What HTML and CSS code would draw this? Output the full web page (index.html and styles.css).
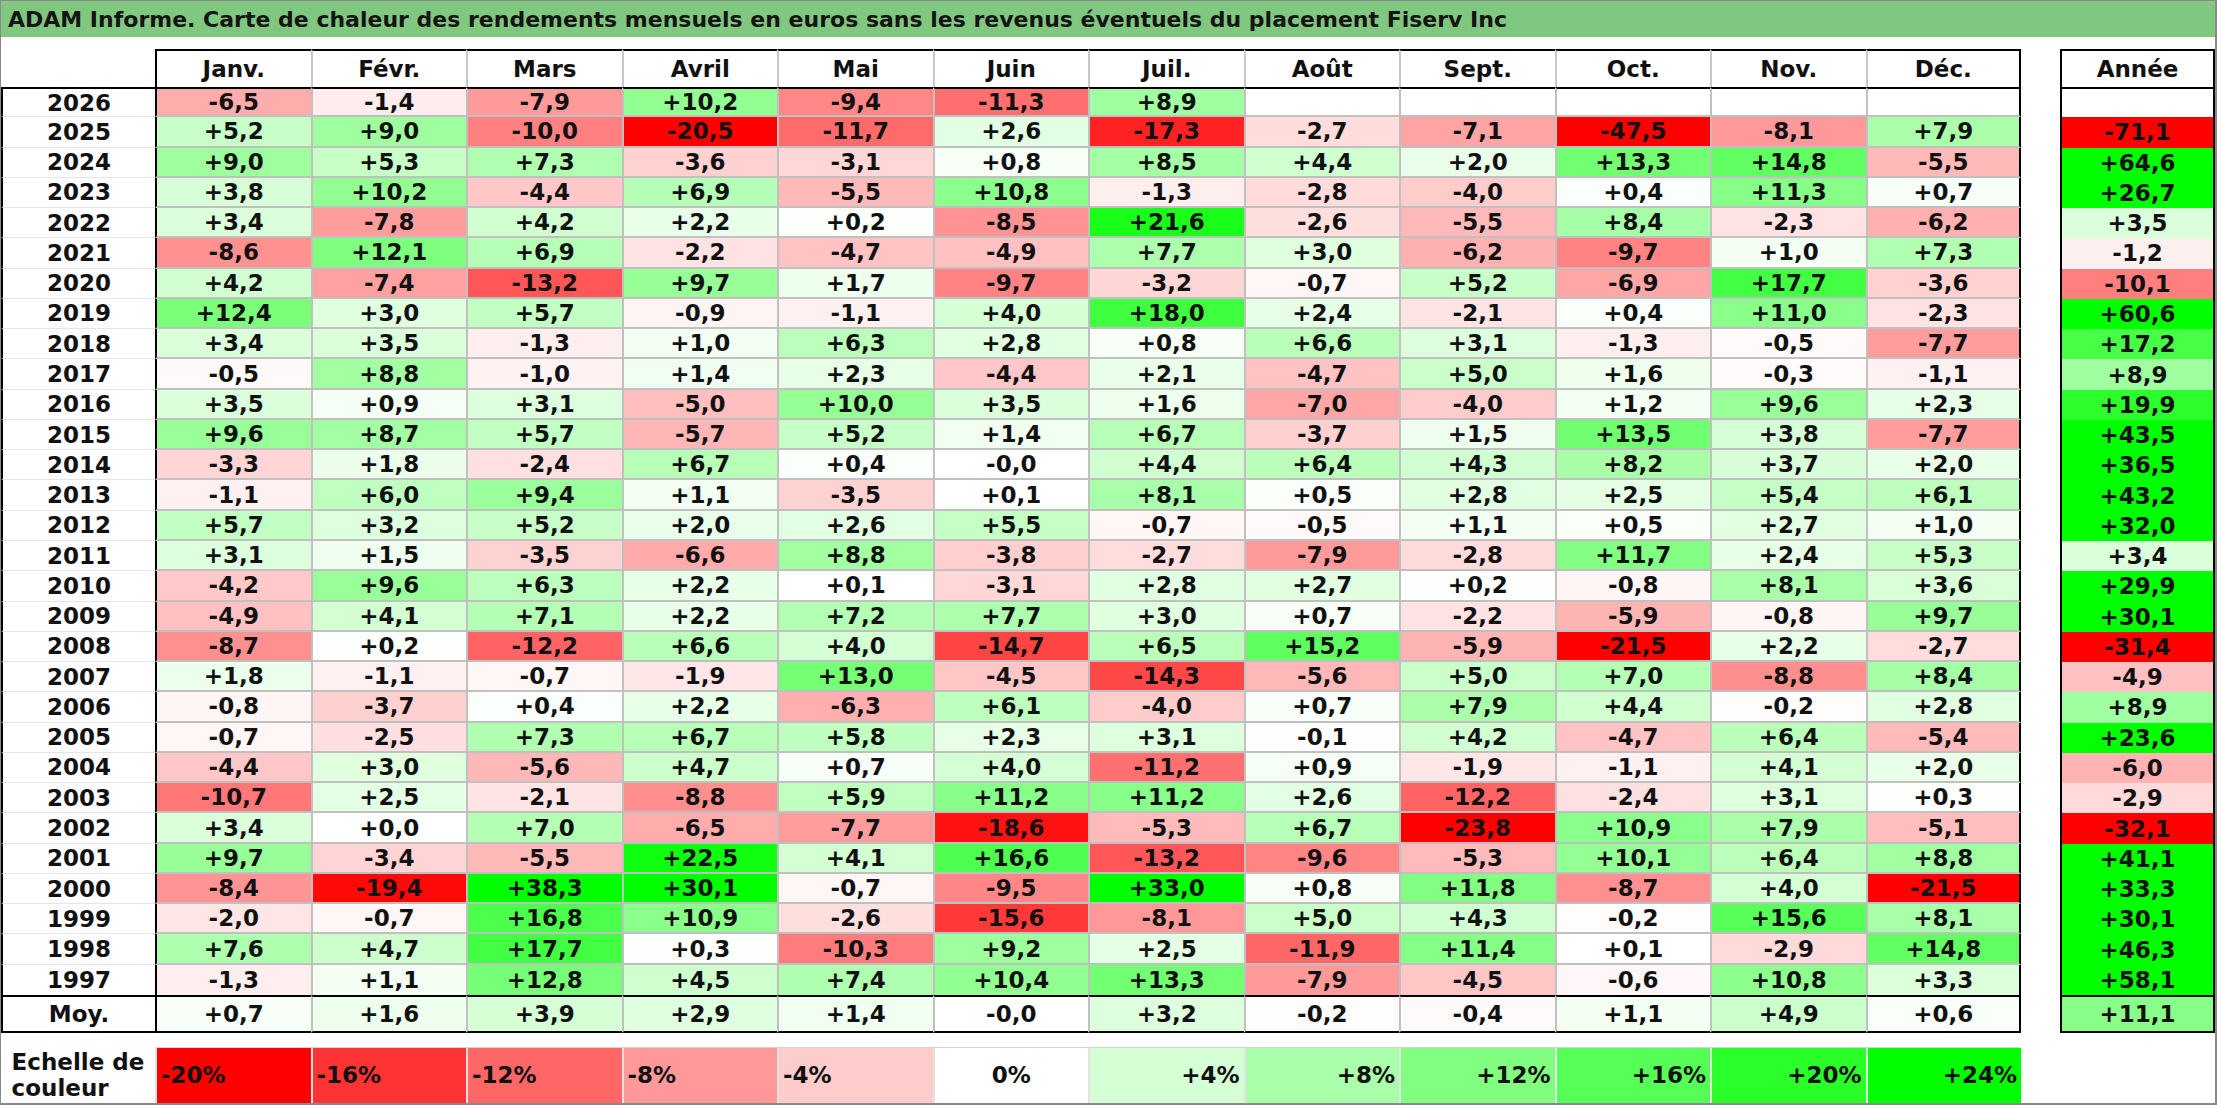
FILE: index.html
```html
<!DOCTYPE html>
<html lang="fr">
<head>
<meta charset="utf-8">
<title>ADAM Informe - Fiserv Inc</title>
<link rel="stylesheet" href="styles.css">
</head>
<body>
<div class="frame">
  <div class="title">ADAM Informe. Carte de chaleur des rendements mensuels en euros sans les revenus éventuels du placement Fiserv Inc</div>
  <div class="sheet">
    <div class="months" id="months">
      <div class="corner"></div>
      <div class="hd first">Janv.</div>
      <div class="hd">Févr.</div>
      <div class="hd">Mars</div>
      <div class="hd">Avril</div>
      <div class="hd">Mai</div>
      <div class="hd">Juin</div>
      <div class="hd">Juil.</div>
      <div class="hd">Août</div>
      <div class="hd">Sept.</div>
      <div class="hd">Oct.</div>
      <div class="hd">Nov.</div>
      <div class="hd last">Déc.</div>
    </div>
    <div class="annee" id="annee">
      <div class="ah">Année</div>
    </div>
  </div>
  <div class="scale" id="scale">
    <div class="slab">Echelle de<br>couleur</div>
  </div>
</div>
<script src="script.js"></script>
</body>
</html>
```

FILE: styles.css
```css
* { box-sizing: border-box; }

body {
  margin: 0;
  font-family: "DejaVu Sans", "Liberation Sans", sans-serif;
  font-weight: bold;
  color: #111;
  background: #fff;
}

.frame {
  width: 2217px;
  height: 1105px;
  border-style: solid;
  border-color: #8a8a8a;
  border-width: 1px 2px 2px 1px;
  display: flex;
  flex-direction: column;
}

.title {
  height: 36px;
  flex: none;
  background: #80c880;
  font-size: 22px;
  padding-left: 7px;
  display: flex;
  align-items: center;
  color: #141414;
}

.sheet {
  display: flex;
  margin-top: 12px;
}

.months {
  width: 2020px;
  display: grid;
  grid-template-columns: 154px repeat(12, 1fr);
  grid-template-rows: 38px repeat(30, 30.27px) 38px;
}

.annee {
  width: 155px;
  margin-left: 39px;
  display: grid;
  grid-template-columns: 1fr;
  grid-template-rows: 38px repeat(30, 30.27px) 38px;
}

.months > div,
.annee > div,
.scale > div {
  display: flex;
  align-items: center;
  justify-content: center;
  font-size: 23px;
  white-space: nowrap;
}

.hd {
  border-top: 2px solid #000;
  border-left: 2px solid #c8c8c8;
}
.hd.first { border-left-color: #000; }
.hd.last { border-right: 2px solid #000; }

.lab {
  border-left: 2px solid #000;
  border-bottom: 1px solid #e4e4e4;
}

.m {
  border-left: 2px solid #c0c0c0;
  border-bottom: 2px solid #c0c0c0;
}
.m.first { border-left-color: #000; }
.m.last { border-right: 2px solid #000; }

.r0 { border-top: 2px solid #000; }
.rlast { border-bottom: none; }

.mo {
  border-top: 2px solid #000;
  border-bottom: 2px solid #000;
}
.lab.mo { border-bottom: 2px solid #000; }
.m.mo { border-bottom: 2px solid #000; }

.ah {
  border: 2px solid #000;
  border-bottom: none;
}

.a {
  border-left: 2px solid #000;
  border-right: 2px solid #000;
}

.scale {
  width: 2020px;
  height: 56px;
  margin-top: 14px;
  display: grid;
  grid-template-columns: 154px repeat(12, 1fr);
}

.scale > .slab {
  flex-direction: column;
  line-height: 26px;
  font-size: 23px;
}

.sc {
  border-left: 2px solid #e2e2e2;
  border-top: 1px solid #d4d4d4;
  padding: 0 4px;
}
.scale > .sc.neg { justify-content: flex-start; }
.scale > .sc.zero { justify-content: center; }
.scale > .sc.pos { justify-content: flex-end; }
```

FILE: script.js
```js
var rows = [
  ["2026", "-6,5 -1,4 -7,9 +10,2 -9,4 -11,3 +8,9 _ _ _ _ _", "_"],
  ["2025", "+5,2 +9,0 -10,0 -20,5 -11,7 +2,6 -17,3 -2,7 -7,1 -47,5 -8,1 +7,9", "-71,1"],
  ["2024", "+9,0 +5,3 +7,3 -3,6 -3,1 +0,8 +8,5 +4,4 +2,0 +13,3 +14,8 -5,5", "+64,6"],
  ["2023", "+3,8 +10,2 -4,4 +6,9 -5,5 +10,8 -1,3 -2,8 -4,0 +0,4 +11,3 +0,7", "+26,7"],
  ["2022", "+3,4 -7,8 +4,2 +2,2 +0,2 -8,5 +21,6 -2,6 -5,5 +8,4 -2,3 -6,2", "+3,5"],
  ["2021", "-8,6 +12,1 +6,9 -2,2 -4,7 -4,9 +7,7 +3,0 -6,2 -9,7 +1,0 +7,3", "-1,2"],
  ["2020", "+4,2 -7,4 -13,2 +9,7 +1,7 -9,7 -3,2 -0,7 +5,2 -6,9 +17,7 -3,6", "-10,1"],
  ["2019", "+12,4 +3,0 +5,7 -0,9 -1,1 +4,0 +18,0 +2,4 -2,1 +0,4 +11,0 -2,3", "+60,6"],
  ["2018", "+3,4 +3,5 -1,3 +1,0 +6,3 +2,8 +0,8 +6,6 +3,1 -1,3 -0,5 -7,7", "+17,2"],
  ["2017", "-0,5 +8,8 -1,0 +1,4 +2,3 -4,4 +2,1 -4,7 +5,0 +1,6 -0,3 -1,1", "+8,9"],
  ["2016", "+3,5 +0,9 +3,1 -5,0 +10,0 +3,5 +1,6 -7,0 -4,0 +1,2 +9,6 +2,3", "+19,9"],
  ["2015", "+9,6 +8,7 +5,7 -5,7 +5,2 +1,4 +6,7 -3,7 +1,5 +13,5 +3,8 -7,7", "+43,5"],
  ["2014", "-3,3 +1,8 -2,4 +6,7 +0,4 -0,0 +4,4 +6,4 +4,3 +8,2 +3,7 +2,0", "+36,5"],
  ["2013", "-1,1 +6,0 +9,4 +1,1 -3,5 +0,1 +8,1 +0,5 +2,8 +2,5 +5,4 +6,1", "+43,2"],
  ["2012", "+5,7 +3,2 +5,2 +2,0 +2,6 +5,5 -0,7 -0,5 +1,1 +0,5 +2,7 +1,0", "+32,0"],
  ["2011", "+3,1 +1,5 -3,5 -6,6 +8,8 -3,8 -2,7 -7,9 -2,8 +11,7 +2,4 +5,3", "+3,4"],
  ["2010", "-4,2 +9,6 +6,3 +2,2 +0,1 -3,1 +2,8 +2,7 +0,2 -0,8 +8,1 +3,6", "+29,9"],
  ["2009", "-4,9 +4,1 +7,1 +2,2 +7,2 +7,7 +3,0 +0,7 -2,2 -5,9 -0,8 +9,7", "+30,1"],
  ["2008", "-8,7 +0,2 -12,2 +6,6 +4,0 -14,7 +6,5 +15,2 -5,9 -21,5 +2,2 -2,7", "-31,4"],
  ["2007", "+1,8 -1,1 -0,7 -1,9 +13,0 -4,5 -14,3 -5,6 +5,0 +7,0 -8,8 +8,4", "-4,9"],
  ["2006", "-0,8 -3,7 +0,4 +2,2 -6,3 +6,1 -4,0 +0,7 +7,9 +4,4 -0,2 +2,8", "+8,9"],
  ["2005", "-0,7 -2,5 +7,3 +6,7 +5,8 +2,3 +3,1 -0,1 +4,2 -4,7 +6,4 -5,4", "+23,6"],
  ["2004", "-4,4 +3,0 -5,6 +4,7 +0,7 +4,0 -11,2 +0,9 -1,9 -1,1 +4,1 +2,0", "-6,0"],
  ["2003", "-10,7 +2,5 -2,1 -8,8 +5,9 +11,2 +11,2 +2,6 -12,2 -2,4 +3,1 +0,3", "-2,9"],
  ["2002", "+3,4 +0,0 +7,0 -6,5 -7,7 -18,6 -5,3 +6,7 -23,8 +10,9 +7,9 -5,1", "-32,1"],
  ["2001", "+9,7 -3,4 -5,5 +22,5 +4,1 +16,6 -13,2 -9,6 -5,3 +10,1 +6,4 +8,8", "+41,1"],
  ["2000", "-8,4 -19,4 +38,3 +30,1 -0,7 -9,5 +33,0 +0,8 +11,8 -8,7 +4,0 -21,5", "+33,3"],
  ["1999", "-2,0 -0,7 +16,8 +10,9 -2,6 -15,6 -8,1 +5,0 +4,3 -0,2 +15,6 +8,1", "+30,1"],
  ["1998", "+7,6 +4,7 +17,7 +0,3 -10,3 +9,2 +2,5 -11,9 +11,4 +0,1 -2,9 +14,8", "+46,3"],
  ["1997", "-1,3 +1,1 +12,8 +4,5 +7,4 +10,4 +13,3 -7,9 -4,5 -0,6 +10,8 +3,3", "+58,1"],
  ["Moy.", "+0,7 +1,6 +3,9 +2,9 +1,4 -0,0 +3,2 -0,2 -0,4 +1,1 +4,9 +0,6", "+11,1"]
];

function heat(s) {
  if (!s || s === "_") return "#ffffff";
  var v = parseFloat(s.replace(",", ".").replace("%", ""));
  if (isNaN(v) || v === 0) return "#ffffff";
  var t, c;
  if (v < 0) {
    t = Math.min(1, -v / 20);
    c = Math.round(255 * (1 - t));
    return "rgb(255," + c + "," + c + ")";
  }
  t = Math.min(1, v / 24);
  c = Math.round(255 * (1 - t));
  return "rgb(" + c + ",255," + c + ")";
}

function cell(parent, cls, text, bg) {
  var d = document.createElement("div");
  d.className = cls;
  d.textContent = text === "_" ? "" : text;
  if (bg) d.style.background = bg;
  parent.appendChild(d);
  return d;
}

var months = document.getElementById("months");
var annee = document.getElementById("annee");
var scale = document.getElementById("scale");

rows.forEach(function (r, i) {
  var extra = "";
  if (i === 0) extra = " r0";
  if (i === rows.length - 2) extra += " rlast";
  if (i === rows.length - 1) extra = " mo";
  cell(months, "lab" + extra, r[0]);
  var vals = r[1].split(" ");
  vals.forEach(function (v, j) {
    var cls = "m" + extra;
    if (j === 0) cls += " first";
    if (j === 11) cls += " last";
    cell(months, cls, v, heat(v));
  });
  cell(annee, "a" + extra, r[2], heat(r[2]));
});

["-20%", "-16%", "-12%", "-8%", "-4%", "0%", "+4%", "+8%", "+12%", "+16%", "+20%", "+24%"].forEach(function (s) {
  var kind = s === "0%" ? "zero" : (s.charAt(0) === "-" ? "neg" : "pos");
  cell(scale, "sc " + kind, s, heat(s));
});
```
